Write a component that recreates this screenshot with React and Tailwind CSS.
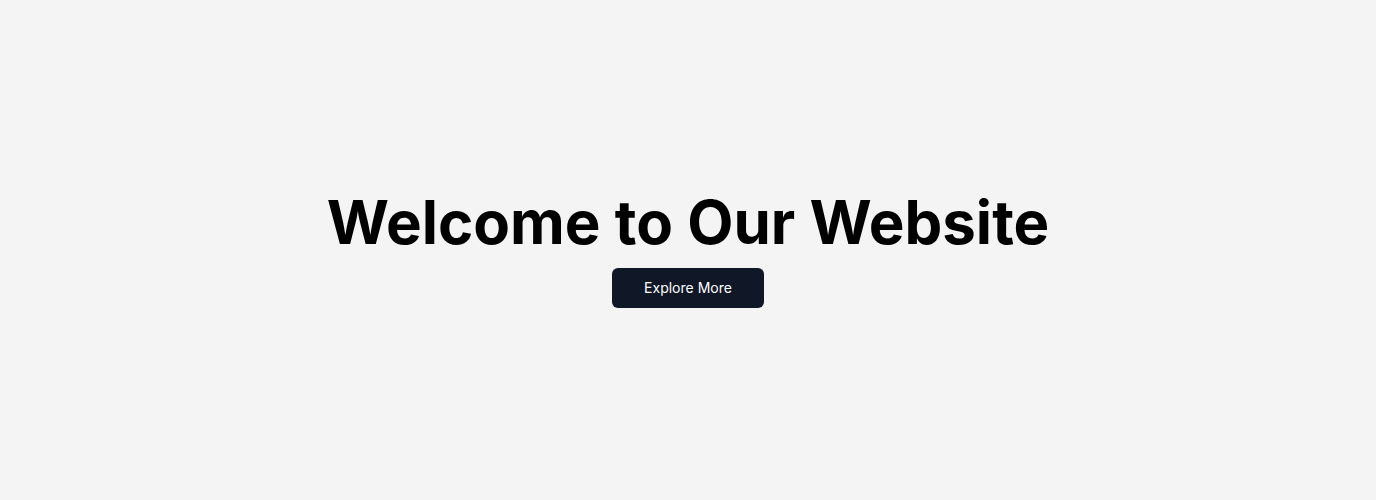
import React from 'react';

const App = () => {
  return (
    <div className="min-h-screen bg-[#f4f4f4] flex flex-col items-center justify-center font-['Inter',sans-serif]">
      <h1 className="text-6xl font-bold text-black mb-4">Welcome to Our Website</h1>
      <button className="px-8 py-2.5 bg-gray-900 text-white text-sm rounded-md">
        Explore More
      </button>
    </div>
  );
};

export default App;
